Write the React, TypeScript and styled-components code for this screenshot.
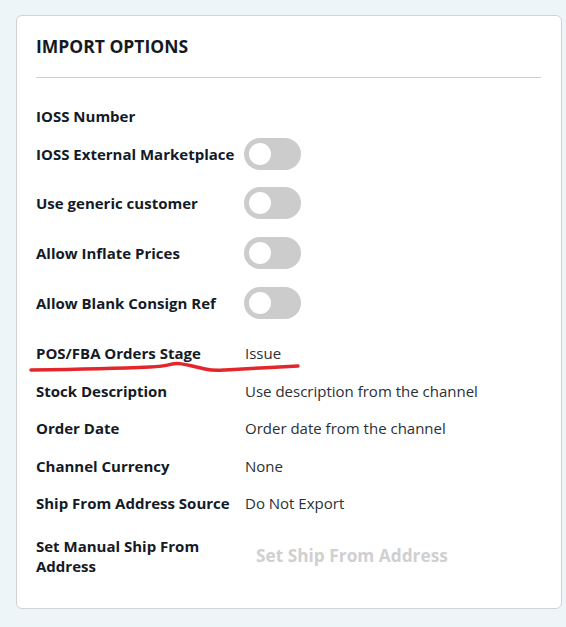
import styled, { createGlobalStyle } from "styled-components";

const GlobalStyle = createGlobalStyle`
  html, body {
    margin: 0;
    padding: 0;
    background: #eef5f8;
    font-family: "Open Sans", "Liberation Sans", sans-serif;
  }
`;

interface Option {
  label: string;
  value?: string;
  toggle?: boolean;
  space?: number;
  marked?: boolean;
}

const options: Option[] = [
  { label: "IOSS Number", space: 28 },
  { label: "IOSS External Marketplace", toggle: true, space: 12 },
  { label: "Use generic customer", toggle: true, space: 17 },
  { label: "Allow Inflate Prices", toggle: true },
  { label: "Allow Blank Consign Ref", toggle: true },
  { label: "POS/FBA Orders Stage", value: "Issue", space: 24, marked: true },
  { label: "Stock Description", value: "Use description from the channel" },
  { label: "Order Date", value: "Order date from the channel", space: 17 },
  { label: "Channel Currency", value: "None" },
  { label: "Ship From Address Source", value: "Do Not Export", space: 17 },
];

export default function App() {
  return (
    <>
      <GlobalStyle />
      <Page>
        <Card>
          <Title>IMPORT OPTIONS</Title>
          <Divider />
          {options.map((o) => (
            <Row key={o.label} $space={o.space ?? 18}>
              <Label>{o.label}</Label>
              {o.toggle ? (
                <Toggle>
                  <Knob />
                </Toggle>
              ) : (
                <Value>{o.value}</Value>
              )}
              {o.marked && (
                <Mark viewBox="0 0 275 12" width="275" height="12">
                  <path
                    d="M3 9 C40 8.5 100 7 122 6 S142 2 150 2.5 S168 6 177 8 S190 9.5 197 9 S250 6 270 5"
                    fill="none"
                    stroke="#e3262b"
                    strokeWidth="3.5"
                    strokeLinecap="round"
                  />
                </Mark>
              )}
            </Row>
          ))}
          <Row $space={23}>
            <Label>Set Manual Ship From Address</Label>
            <LinkButton disabled>Set Ship From Address</LinkButton>
          </Row>
        </Card>
      </Page>
    </>
  );
}

const Page = styled.div`
  padding: 15px 4px 19px 16px;
`;

const Card = styled.div`
  display: flex;
  flex-direction: column;
  width: 546px;
  box-sizing: border-box;
  padding: 18px 20px 32px 19px;
  background: #ffffff;
  border: 1px solid #cfd3d6;
  border-radius: 6px;
`;

const Title = styled.div`
  font-size: 17.5px;
  line-height: 24px;
  font-weight: 700;
  color: #141a24;
`;

const Divider = styled.div`
  height: 1px;
  background: #cfcfcf;
  margin-top: 19px;
`;

const Row = styled.div<{ $space: number }>`
  position: relative;
  display: grid;
  grid-template-columns: 200px 1fr;
  column-gap: 9px;
  align-items: center;
  margin-top: ${(p) => p.$space}px;
`;

const Label = styled.div`
  font-size: 15px;
  line-height: 20px;
  font-weight: 700;
  color: #141a26;
`;

const Value = styled.div`
  font-size: 15px;
  line-height: 20px;
  color: #2b2f36;
`;

const Toggle = styled.div`
  position: relative;
  width: 57px;
  height: 32px;
  margin-left: -1px;
  border-radius: 16px;
  background: #cccccc;
`;

const Knob = styled.span`
  position: absolute;
  left: 5px;
  top: 5px;
  width: 22px;
  height: 22px;
  border-radius: 50%;
  background: #ffffff;
`;

const LinkButton = styled.button`
  justify-self: start;
  border: none;
  background: none;
  padding: 0 11px;
  font-family: inherit;
  font-size: 17.3px;
  font-weight: 700;
  line-height: 24px;
  color: #d0d0d0;
  cursor: default;
`;

const Mark = styled.svg`
  position: absolute;
  left: -8px;
  top: 18px;
  pointer-events: none;
`;
